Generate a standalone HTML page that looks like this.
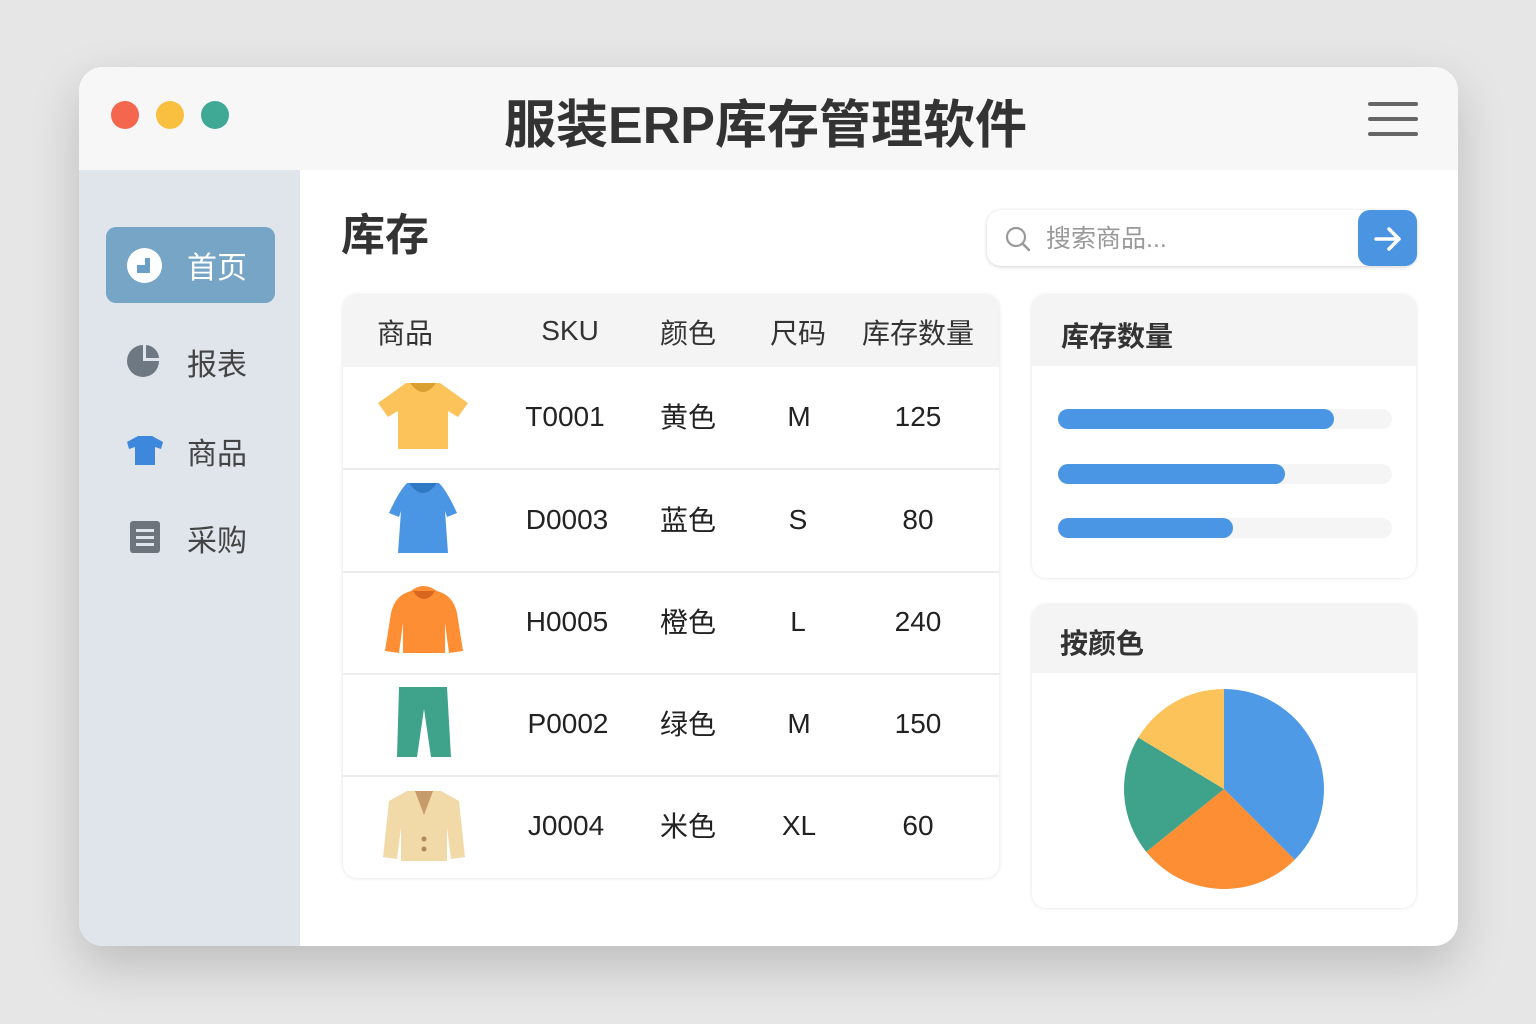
<!DOCTYPE html>
<html><head><meta charset="utf-8"><style>
*{margin:0;padding:0;box-sizing:border-box}
body{width:1536px;height:1024px;background:#e6e6e6;font-family:"Liberation Sans","Noto Sans CJK SC",sans-serif;position:relative;overflow:hidden;color:#222}
.a{position:absolute}
.win{left:79px;top:67px;width:1379px;height:879px;border-radius:24px;background:#fff;overflow:hidden;box-shadow:0 20px 50px rgba(0,0,0,.18)}
.hdr{left:0;top:0;width:1379px;height:103px;background:#f7f7f7}
.side{left:0;top:103px;width:221px;height:776px;background:#dfe5ea}
.dot{width:28px;height:28px;border-radius:50%}
.t{font-size:28px;white-space:nowrap}
.k{margin-top:-5px}
.c{transform:translateX(-50%)}
.card{background:#fff;border-radius:14px;box-shadow:0 0 4px rgba(0,0,0,.12);overflow:hidden}
.row{left:0;width:656px;border-top:2px solid #ececec}
.bar{height:20px;border-radius:10px;background:#4a96e4;left:26px}
.trk{height:20px;border-radius:10px;background:#f5f5f5;left:26px;width:334px}
</style></head><body>
<div class="a win">
 <div class="a hdr"></div>
 <div class="a dot" style="left:32px;top:34px;background:#f4664e"></div>
 <div class="a dot" style="left:77px;top:34px;background:#f9bf3e"></div>
 <div class="a dot" style="left:122px;top:34px;background:#3fa996"></div>
 <div class="a" style="left:0;width:1379px;top:16px;text-align:center;font-size:52px;font-weight:bold;color:#333;padding-right:6px">服装ERP库存管理软件</div>
 <div class="a" style="left:1289px;top:35px;width:50px;height:4px;background:#666;border-radius:2px"></div>
 <div class="a" style="left:1289px;top:50px;width:50px;height:4px;background:#666;border-radius:2px"></div>
 <div class="a" style="left:1289px;top:65px;width:50px;height:4px;background:#666;border-radius:2px"></div>
 <div class="a side"></div>
 <div class="a" style="left:27px;top:160px;width:169px;height:76px;background:#76a5c5;border-radius:10px"></div>
 <div class="a" style="left:48px;top:181px;width:35px;height:35px;border-radius:50%;background:#fff"></div>
 <div class="a" style="left:58px;top:198px;width:13px;height:8px;background:#6aa0c8"></div>
 <div class="a" style="left:66px;top:191px;width:5px;height:15px;background:#6aa0c8"></div>
 <div class="a t" style="left:108px;top:176px;font-size:30px;color:#fff">首页</div>
 <svg class="a" style="left:46px;top:276px" width="36" height="36" viewBox="0 0 36 36"><path d="M18 2 A16 16 0 1 0 34 18 L18 18 Z" fill="#6e7882"/><path d="M21 2 A14 14 0 0 1 34 15 L21 15 Z" fill="#6e7882"/></svg>
 <div class="a t" style="left:108px;top:273px;font-size:30px;color:#444">报表</div>
 <svg class="a" style="left:47px;top:367px" width="38" height="32" viewBox="0 0 38 32"><path d="M12 2 L26 2 L37 8 L35 15 L29 13 L29 31 L9 31 L9 13 L3 15 L1 8 Z" fill="#3d87dd"/></svg>
 <div class="a t" style="left:108px;top:362px;font-size:30px;color:#444">商品</div>
 <div class="a" style="left:51px;top:454px;width:30px;height:32px;background:#6c747c;border-radius:3px"></div>
 <div class="a" style="left:57px;top:462px;width:18px;height:3px;background:#dfe5ea"></div>
 <div class="a" style="left:57px;top:469px;width:18px;height:3px;background:#dfe5ea"></div>
 <div class="a" style="left:57px;top:476px;width:18px;height:3px;background:#dfe5ea"></div>
 <div class="a t" style="left:108px;top:449px;font-size:30px;color:#444">采购</div>

 <div class="a t" style="left:262px;top:132px;font-size:44px;color:#333;font-weight:bold">库存</div>
 <div class="a" style="left:908px;top:143px;width:430px;height:56px;border-radius:14px;background:#fff;box-shadow:0 1px 4px rgba(0,0,0,.18)"></div>
 <svg class="a" style="left:925px;top:158px" width="28" height="28" viewBox="0 0 28 28"><circle cx="12" cy="12" r="9" fill="none" stroke="#999" stroke-width="2.2"/><path d="M18.5 18.5 L25 25" stroke="#999" stroke-width="2.4" stroke-linecap="round"/></svg>
 <div class="a t" style="left:967px;top:152px;font-size:25px;color:#999">搜索商品...</div>
 <div class="a" style="left:1279px;top:143px;width:59px;height:56px;border-radius:12px;background:#4a94e2"></div>
 <svg class="a" style="left:1289px;top:152px" width="40" height="40" viewBox="0 0 40 40"><path d="M8 20 H31 M21 10 L31 20 L21 30" fill="none" stroke="#fff" stroke-width="3.5" stroke-linecap="round" stroke-linejoin="round"/></svg>

 <div class="a card" style="left:264px;top:228px;width:656px;height:583px">
  <div class="a" style="left:0;top:0;width:656px;height:72px;background:#f4f4f4"></div>
  <div class="a t" style="left:34px;top:17px;color:#333">商品</div>
  <div class="a t c" style="left:227px;top:20px;color:#333">SKU</div>
  <div class="a t c" style="left:345px;top:17px;color:#333">颜色</div>
  <div class="a t c" style="left:455px;top:17px;color:#333">尺码</div>
  <div class="a t c" style="left:575px;top:17px;color:#333">库存数量</div>
  <div class="a row" style="top:173px"></div>
  <div class="a row" style="top:276px"></div>
  <div class="a row" style="top:378px"></div>
  <div class="a row" style="top:480px"></div>
  <svg class="a" style="left:33px;top:86px" width="94" height="70" viewBox="0 0 94 70"><path d="M30 2 L64 2 L92 22 L82 36 L72 30 L72 68 L22 68 L22 30 L12 36 L2 22 Z" fill="#fcc35a"/><path d="M34 2 Q47 20 60 2 Z" fill="#d9a030"/></svg>
  <svg class="a" style="left:42px;top:186px" width="76" height="74" viewBox="0 0 76 74"><path d="M22 2 L54 2 Q62 10 72 32 L62 36 L60 30 L63 72 L13 72 L16 30 L14 36 L4 32 Q14 10 22 2 Z" fill="#4b96e4"/><path d="M24 2 Q38 22 52 2 Z" fill="#2f78c4"/></svg>
  <svg class="a" style="left:40px;top:288px" width="82" height="74" viewBox="0 0 82 74"><path d="M28 8 Q40 -2 54 8 Q70 12 74 30 L80 68 L66 70 L62 40 L62 70 L20 70 L20 40 L16 70 L2 68 L8 30 Q12 12 28 8 Z" fill="#fd8e34"/><path d="M30 8 Q41 24 52 8 Z" fill="#d9661e"/></svg>
  <svg class="a" style="left:52px;top:392px" width="58" height="72" viewBox="0 0 58 72"><path d="M4 0 L52 0 L56 70 L36 70 L29 22 L22 70 L2 70 Z" fill="#3fa38c"/></svg>
  <svg class="a" style="left:38px;top:492px" width="86" height="76" viewBox="0 0 86 76"><path d="M26 4 L60 4 L78 14 L84 70 L70 72 L66 40 L66 74 L20 74 L20 40 L16 72 L2 70 L8 14 Z" fill="#f2d9a8"/><path d="M34 4 L43 28 L52 4 Z" fill="#c79c6a"/><circle cx="43" cy="52" r="2.5" fill="#b08a5c"/><circle cx="43" cy="62" r="2.5" fill="#b08a5c"/></svg>
  <div class="a t c" style="left:222px;top:106px">T0001</div>
  <div class="a t c k" style="left:345px;top:106px">黄色</div>
  <div class="a t c" style="left:456px;top:106px">M</div>
  <div class="a t c" style="left:575px;top:106px">125</div>
  <div class="a t c" style="left:224px;top:209px">D0003</div>
  <div class="a t c k" style="left:345px;top:209px">蓝色</div>
  <div class="a t c" style="left:455px;top:209px">S</div>
  <div class="a t c" style="left:575px;top:209px">80</div>
  <div class="a t c" style="left:224px;top:311px">H0005</div>
  <div class="a t c k" style="left:345px;top:311px">橙色</div>
  <div class="a t c" style="left:455px;top:311px">L</div>
  <div class="a t c" style="left:575px;top:311px">240</div>
  <div class="a t c" style="left:225px;top:413px">P0002</div>
  <div class="a t c k" style="left:345px;top:413px">绿色</div>
  <div class="a t c" style="left:456px;top:413px">M</div>
  <div class="a t c" style="left:575px;top:413px">150</div>
  <div class="a t c" style="left:223px;top:515px">J0004</div>
  <div class="a t c k" style="left:345px;top:515px">米色</div>
  <div class="a t c" style="left:456px;top:515px">XL</div>
  <div class="a t c" style="left:575px;top:515px">60</div>
 </div>

 <div class="a card" style="left:953px;top:228px;width:384px;height:283px">
  <div class="a" style="left:0;top:0;width:384px;height:71px;background:#f4f4f4"></div>
  <div class="a t" style="left:29px;top:20px;color:#333;font-weight:bold">库存数量</div>
  <div class="a trk" style="top:114px"></div><div class="a bar" style="top:114px;width:276px"></div>
  <div class="a trk" style="top:169px"></div><div class="a bar" style="top:169px;width:227px"></div>
  <div class="a trk" style="top:223px"></div><div class="a bar" style="top:223px;width:175px"></div>
 </div>
 <div class="a card" style="left:953px;top:538px;width:384px;height:303px">
  <div class="a" style="left:0;top:0;width:384px;height:68px;background:#f4f4f4"></div>
  <div class="a t" style="left:28px;top:17px;color:#333;font-weight:bold">按颜色</div>
  <svg class="a" style="left:92px;top:84px" width="200" height="200" viewBox="-100 -100 200 200">
   <path d="M0 0 L0 -100 A100 100 0 0 1 70.7 70.7 Z" fill="#4f9ae6"/>
   <path d="M0 0 L70.7 70.7 A100 100 0 0 1 -77.7 62.9 Z" fill="#fd8e34"/>
   <path d="M0 0 L-77.7 62.9 A100 100 0 0 1 -85.7 -51.5 Z" fill="#3fa38c"/>
   <path d="M0 0 L-85.7 -51.5 A100 100 0 0 1 0 -100 Z" fill="#fcc35a"/>
  </svg>
 </div>
</div>
</body></html>
